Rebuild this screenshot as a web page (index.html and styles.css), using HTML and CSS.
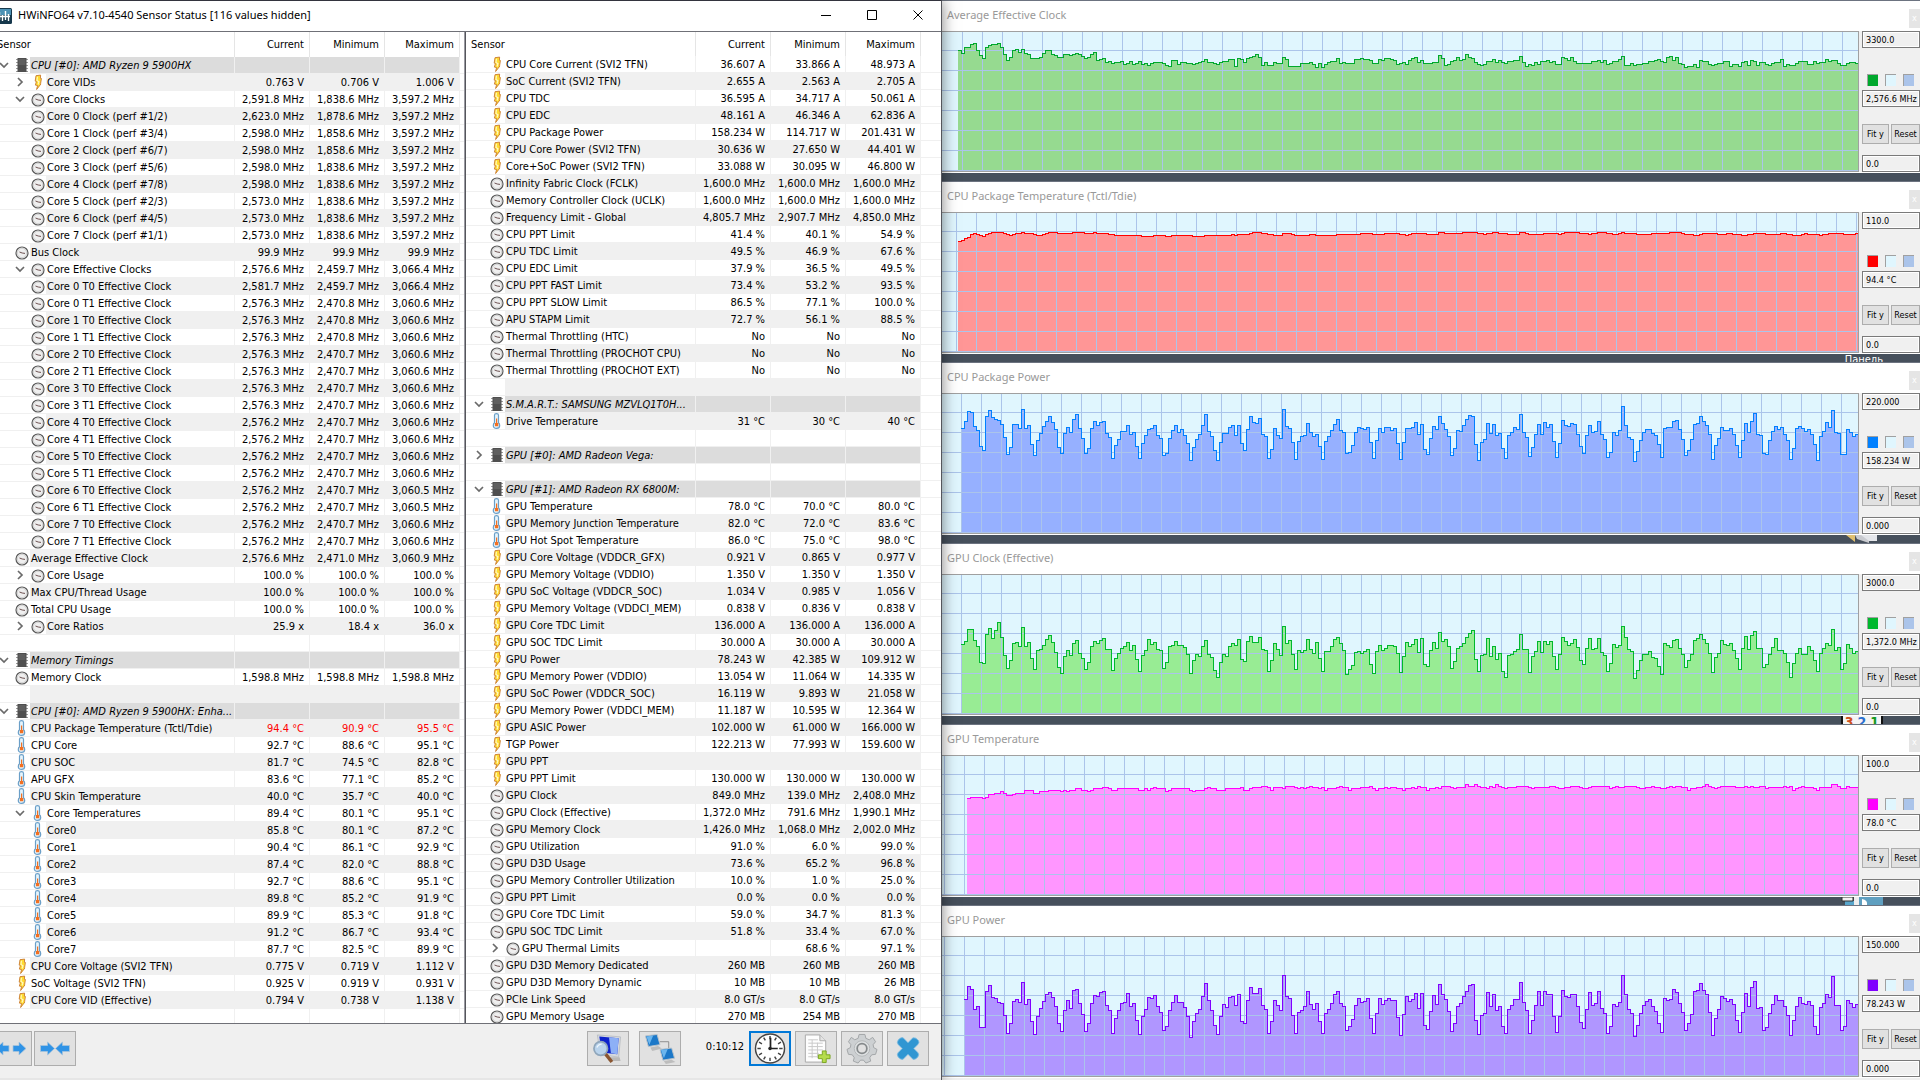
FILE: index.html
```html
<!DOCTYPE html>
<html lang="en">
<head>
  <meta charset="utf-8">
  <title>HWiNFO64 Sensor Status</title>
  <link rel="stylesheet" href="styles.css">
</head>
<body>
  <svg class="sprite" aria-hidden="true">
    <symbol id="clock" viewBox="0 -1 16 16">
      <circle cx="8" cy="8" r="6" fill="#efefef" stroke="#5a5a5a" stroke-width="1.2"/>
      <circle cx="8" cy="8" r="4.7" fill="none" stroke="#d2d2d2" stroke-width="1"/>
      <path d="M5.5 7 L8.2 8 L11 8.4" fill="none" stroke="#6e5252" stroke-width="1"/>
    </symbol>
    <symbol id="bolt" viewBox="0 -.5 16 16">
      <path d="M6 1.2 L10.6 .6 L10.4 3.8 L11.4 4 L10.6 9 L11 9.4 L6.6 15 L7.6 11 L5.4 10.6 L6.4 7 L5.2 6.6 Z" fill="#ffdc32" stroke="#c97a30" stroke-width=".9"/>
      <path d="M7.4 2.2 L7 6 L9 7.2 L8 10" fill="none" stroke="#fff9c8" stroke-width="1.1"/>
    </symbol>
    <symbol id="temp" viewBox="0 0 16 16">
      <path d="M5.5 2.2 Q5.5 .7 7.5 .7 Q9.500 .7 9.500 2.2 V9.8 Q10.700 10.8 10.700 12.4 Q10.700 15.3 7.500 15.3 Q4.300 15.3 4.300 12.4 Q4.300 10.8 5.500 9.8 Z" fill="#e6f4fc" stroke="#6a9fc8" stroke-width="1.2"/>
      <path d="M7 5.500 H8.200 V10 H9.300 V13.3 H5.900 V10 H7 Z" fill="#f27022"/>
    </symbol>
    <symbol id="chip" viewBox="0 0 16 16">
      <path d="M2 2.5H14M2 5.5H14M2 8.5H14M2 11.5H14M2 14.5H14" stroke="#9a9a9a" stroke-width="1"/>
      <rect x="3.500" y="1" width="9" height="14" fill="#4f4f4f"/>
      <rect x="4.500" y="2" width="7" height="6" fill="#5f5f5f"/>
    </symbol>
    <symbol id="open" viewBox="0 0 16 16">
      <path d="M2 6 L6 10 L10 6" fill="none" stroke="#6a6a6a" stroke-width="1.7"/>
    </symbol>
    <symbol id="closed" viewBox="0 0 16 16">
      <path d="M4 4 L8 8 L4 12" fill="none" stroke="#6a6a6a" stroke-width="1.7"/>
    </symbol>
  </svg>

  <div class="desktop">
    <main class="main-window">
      <header class="title-bar">
        <svg class="logo" viewBox="0 0 16 16" aria-hidden="true">
          <rect width="16" height="16" rx="1.5" fill="#16384c"/>
          <rect x="1" y="1" width="14" height="6" fill="#4d92b5"/>
          <path d="M3.5 4V12M6.5 7V13M9.5 3V12M12.5 6V13M2 8.5H14" stroke="#fff" stroke-width="1.4"/>
        </svg>
        <h1>HWiNFO64 v7.10-4540 Sensor Status [116 values hidden]</h1>
        <div class="window-buttons">
          <button aria-label="Minimize"><svg viewBox="0 0 10 10"><path d="M0 5.5H10"/></svg></button>
          <button aria-label="Maximize"><svg viewBox="0 0 10 10"><path d="M.5 .5H9.5V9.5H.5Z"/></svg></button>
          <button aria-label="Close"><svg viewBox="0 0 10 10"><path d="M.5 .5L9.5 9.5M9.5 .5L.5 9.5"/></svg></button>
        </div>
      </header>

      <div class="panels">
        <div class="panel left" id="leftPanel"></div>
        <div class="panel right" id="rightPanel"></div>
      </div>

      <footer class="toolbar">
        <div class="tool-group">
          <button aria-label="Expand columns">
            <svg viewBox="0 0 32 16"><path d="M1 8 L8 1.5 V5 H14 V11 H8 V14.5 Z M31 8 L24 1.5 V5 H18 V11 H24 V14.5 Z" fill="#2f93e6" stroke="#a8c4dc" stroke-width=".8"/></svg>
          </button>
          <button aria-label="Shrink columns">
            <svg viewBox="0 0 32 16"><path d="M15.5 8 L8.5 1.5 V5 H1.5 V11 H8.5 V14.5 Z M16.5 8 L23.5 1.5 V5 H30.5 V11 H23.5 V14.5 Z" fill="#2f93e6" stroke="#a8c4dc" stroke-width=".8"/></svg>
          </button>
        </div>
        <div class="tool-group">
          <button class="spaced" aria-label="Summary">
            <svg viewBox="0 0 32 32">
              <path d="M5 2 L29 4 L27 25 L8 22 Z" fill="#d5d9df" stroke="#a9adb5" stroke-width=".6"/>
              <path d="M7 3.500 L27 5.500 L25.500 22 L9.500 20 Z" fill="#0d22cc"/>
              <path d="M17 4.500 L27 5.500 L25.500 22 L19 21 Z" fill="#8db0f6"/>
              <path d="M15 25 H28 L29 29 H17 Z" fill="#b9b9b9"/>
              <path d="M13 21 L20 30" stroke="#8a5631" stroke-width="3.500"/>
              <circle cx="8.500" cy="16" r="7" fill="#b9d3ec" stroke="#8fa6bb" stroke-width="1.800"/>
              <path d="M4.500 15 Q6 11.500 9.500 11.500" fill="none" stroke="#eef6fc" stroke-width="1.500"/>
            </svg>
          </button>
          <button class="spaced" aria-label="Network">
            <svg viewBox="0 0 32 32">
              <path d="M16 9 H25 V18" fill="none" stroke="#8b8b8b" stroke-width="1"/>
              <path d="M1 3 L13 1.500 L16 12 L4 14 Z" fill="#1c78c8" stroke="#b9c2c9" stroke-width="1"/>
              <path d="M2 3.500 L9 2.600 L5 12 Z" fill="#6cb6ee"/>
              <path d="M6 15 L14 13.500 L18 16 L8 18.500 Z" fill="#bdbdbd"/>
              <path d="M16 17 L28 15.500 L31 26 L19 28 Z" fill="#1c78c8" stroke="#b9c2c9" stroke-width="1"/>
              <path d="M17 17.500 L24 16.600 L20 26 Z" fill="#6cb6ee"/>
              <path d="M20 29 L28 27.500 L32 30 L22 32 Z" fill="#bdbdbd"/>
            </svg>
          </button>
          <time>0:10:12</time>
          <button class="focused" aria-label="Reset clock">
            <svg viewBox="0 0 32 32">
              <circle cx="16" cy="16" r="15" fill="#fff" stroke="#444" stroke-width="1.500"/>
              <path d="M16 3V6.500M16 25.500V29M3 16H6.500M25.500 16H29M9.500 4.700L11.200 7.700M22.500 4.700L20.800 7.700M4.700 9.500L7.700 11.200M27.300 9.500L24.300 11.200M4.700 22.500L7.700 20.800M27.300 22.500L24.300 20.800M9.500 27.300L11.200 24.300M22.500 27.300L20.800 24.300" stroke="#444" stroke-width="1.500"/>
              <path d="M16.500 5V16H24" fill="none" stroke="#222" stroke-width="1.800"/>
              <circle cx="16" cy="16" r="1.800" fill="#222"/>
            </svg>
          </button>
          <button aria-label="Log to file">
            <svg viewBox="0 0 32 32">
              <path d="M5 2 H20 L26 8 V30 H5 Z" fill="#fdfdfd" stroke="#a9a9a9"/>
              <path d="M20 2 V8 H26" fill="#e4e4e4" stroke="#a9a9a9"/>
              <path d="M8 7H18M8 10.500H23M8 14H23M8 17.500H23M8 21H19M8 24.500H18M12 7V26M17.500 10V26" stroke="#c9c9c9"/>
              <path d="M22.500 18.500 H26.500 V22.500 H30.500 V26.500 H26.500 V30.500 H22.500 V26.500 H18.500 V22.500 H22.500 Z" fill="#b5dc4c" stroke="#7ba622"/>
            </svg>
          </button>
          <button aria-label="Settings">
            <svg viewBox="0 0 32 32">
              <path d="M13 1.500 H19 L20 5.500 L23.500 7 L27 4.500 L30 9 L27.500 12 L28 15 L31.500 17 L30 22 L26 22.500 L24 25.500 L25 29 L20 31 L17.500 28 H14.500 L12 31 L7 29 L8 25.500 L6 22.500 L2 22 L.500 17 L4 15 L4.500 12 L2 9 L5 4.500 L8.500 7 L12 5.500 Z" fill="#cdd0d2" stroke="#a2a5a7"/>
              <circle cx="16" cy="16" r="8" fill="#dde0e1" stroke="#b5b8ba"/>
              <circle cx="16" cy="16" r="5" fill="#e1e1e1" stroke="#85898b" stroke-width="1.800"/>
            </svg>
          </button>
          <button aria-label="Close sensors">
            <svg viewBox="0 0 32 32">
              <path d="M11 5 L16 10 L21 5 Q24 4 27 8 Q28 10 26 12 L22 16 L26 20 Q28 22 26 25 Q23 28 21 27 L16 22 L11 27 Q9 28 6 25 Q4 22 6 20 L10 16 L6 12 Q4 10 6 7 Q9 4 11 5 Z" fill="#3096d2" stroke="#7dbde2" stroke-width=".8"/>
            </svg>
          </button>
        </div>
      </footer>
    </main>

    <section class="charts" id="charts"></section>
  </div>

  <script src="script.js"></script>
</body>
</html>
```
FILE: styles.css
```css
* {
  box-sizing: border-box;
}
body {
  margin: 0;
  height: 100vh;
  overflow: hidden;
  background: #4a5460;
  color: #000;
  font-family: "DejaVu Sans Condensed", Tahoma, sans-serif;
  font-size: 11px;
}
button, input {
  font: inherit;
  color: inherit;
  padding: 0;
}
.sprite {
  display: none;
}
.desktop {
  display: grid;
  grid-template-columns: 942fr 978fr;
  grid-template-rows: 100%;
  height: 100%;
}

/* main sensor window, left edge is dragged past the screen */
.main-window {
  z-index: 1;
  display: flex;
  flex-direction: column;
  min-width: 0;
  margin-left: -10px;
  background: #fff;
  border-top: 1px solid #33343e;
  border-right: 1px solid #55565c;
  box-shadow: 0 0 14px rgba(0, 0, 0, 0.5);
}
.title-bar {
  display: flex;
  align-items: center;
  height: 30px;
  padding-left: 6px;
}
.logo {
  width: 16px;
  height: 16px;
}
.title-bar h1, .chart-title h2 {
  margin: 0;
  padding-bottom: 3px;
  font-family: "Noto Sans", "Segoe UI", sans-serif;
  font-size: 11px;
  font-weight: normal;
}
.title-bar h1 {
  margin-left: 6px;
}
.window-buttons {
  display: flex;
  margin-left: auto;
}
.window-buttons button {
  width: 46px;
  height: 29px;
  background: none;
  border: none;
}
.window-buttons svg {
  width: 10px;
  height: 10px;
  fill: none;
  stroke: #000;
}
.panels {
  flex: 1;
  display: grid;
  grid-template-columns: 475fr 476fr;
  grid-template-rows: 100%;
  min-height: 0;
  border-top: 1px solid #6f7077;
  border-bottom: 1px solid #6f7077;
}
.panel {
  overflow: hidden;
  min-width: 0;
  border-right: 1px solid #9a9aa2;
}
.panel.right {
  border-left: 1px solid #55565c;
  border-right: none;
}
.panel table {
  width: 100%;
  table-layout: fixed;
  border-spacing: 0;
  white-space: nowrap;
}
.value-col {
  width: 75px;
}
.left .rest-col {
  width: 4px;
}
.right .rest-col {
  width: 20px;
}
.panel th {
  height: 24px;
  padding: 0 5px;
  font-weight: normal;
  text-align: right;
  border-right: 1px solid #e5e5e5;
}
.left th {
  height: 25px;
}
.left th:first-child {
  padding-left: 7px;
}
.panel th:first-child {
  text-align: left;
}
.panel th:last-child, .panel td:last-child {
  border-right: none;
}
.panel td {
  height: 17px;
  padding: 2px 5px 0 0;
  line-height: 14px;
  text-align: right;
  border-right: 1px solid #f0f0f0;
  border-bottom: 1px solid #f0f0f0;
}
.panel td:first-child {
  padding: 0;
  text-align: left;
}
.name {
  display: flex;
  height: 16px;
  padding-left: 7px;
}
.left .name {
  padding-left: 8px;
}
.level-1 .name {
  padding-left: 23px;
}
.left .level-1 .name {
  padding-left: 24px;
}
.name svg, .name i {
  flex: none;
  width: 16px;
  height: 16px;
}
.name span {
  flex: 1;
  height: 16px;
  padding: 2px 0 0 1px;
}
.odd .name span, .odd td:not(:first-child):not(:last-child) {
  background: #f0f0f0;
}
.group .name span, .group td:not(:first-child):not(:last-child) {
  background: #dcdcdc;
}
.group .name span {
  font-style: italic;
}
.alert td {
  color: #f00;
}
.alert td:first-child {
  color: #000;
}

.toolbar {
  display: flex;
  flex: none;
  justify-content: space-between;
  height: 56px;
  padding: 7px 12px 0 0;
  background: #f0f0f0;
  border-bottom: 2px solid #e6e6e6;
}
.tool-group {
  display: flex;
  align-items: flex-start;
  gap: 4px;
}
.tool-group:first-child {
  gap: 2px;
}
.toolbar button {
  width: 42px;
  height: 35px;
  background: #e1e1e1;
  border: 1px solid #adadad;
}
.toolbar button.spaced {
  margin-right: 6px;
}
.toolbar button.focused {
  border: 2px solid #0078d7;
}
.toolbar svg {
  display: block;
  height: 31px;
  width: 32px;
  margin: 0 auto;
}
.toolbar time {
  margin: 0 1px 0 15px;
  line-height: 32px;
}

/* graph windows */
.charts {
  min-width: 0;
  background: #f0f0f0;
}
.chart {
  border-top: 1px solid #6c7380;
  background: #f0f0f0;
}
.chart-title {
  display: flex;
  align-items: center;
  justify-content: space-between;
  height: 30px;
  padding-left: 5px;
  background: #fff;
  color: #999;
}
.chart-title button {
  width: 11px;
  height: 19px;
  margin-top: 4px;
  overflow: hidden;
  background: #e5e5e5;
  border: none;
  color: #fff;
  font-size: 9px;
}
.chart-body {
  display: flex;
  height: 142px;
  border-bottom: 1px solid #fff;
}
.plot {
  flex: 1;
  min-width: 0;
  border: 1px solid #a0a0a0;
  border-left: none;
  background: #e0f6fe;
}
.plot svg {
  display: block;
  width: 100%;
  height: 139px;
}
.controls {
  width: 61px;
  padding-left: 3px;
}
.controls input {
  display: block;
  width: 58px;
  height: 17px;
  padding-left: 3px;
  background: #f0f0f0;
  border: 1px solid #7a7a7a;
  outline: 1px solid #fff;
  outline-offset: -2px;
  font-size: 9px;
}
.swatches {
  display: flex;
  gap: 7px;
  padding: 26px 0 4px 5px;
}
.swatch {
  width: 11px;
  height: 12px;
  border: 1px solid #a0a0a0;
  border-width: 1px 0 0 1px;
}
.swatch.back {
  background: #e0f6fe;
}
.swatch.grid {
  background: #abc4ea;
}
.scale-buttons {
  display: flex;
  gap: 2px;
  padding: 17px 0 11px;
}
.scale-buttons button {
  width: 27px;
  height: 20px;
  background: #e1e1e1;
  border: 1px solid #adadad;
  font-size: 9px;
}
.scale-buttons button:last-child {
  width: 29px;
}
/* strip of the desktop that shows between two graph windows */
.gap {
  display: flex;
  justify-content: flex-end;
  height: 8px;
  padding-right: 37px;
  overflow: hidden;
  background: #46505c;
  color: #fff;
  line-height: 12px;
}
.gap svg {
  width: 42px;
  height: 8px;
}
.gap b {
  padding: 0 2px;
  background: #f4f4f4;
  font-size: 14px;
}
.gap .red { color: #d0501c; border-left: 2px solid #111; }
.gap .blue { color: #2a6fd0; }
.gap .green { color: #159a20; border-right: 2px solid #111; }
```
FILE: script.js
```javascript
// level | icon | twisty | name | current | minimum | maximum
const leftRows = `
0|chip|open|CPU [#0]: AMD Ryzen 9 5900HX
1|bolt|closed|Core VIDs|0.763 V|0.706 V|1.006 V
1|clock|open|Core Clocks|2,591.8 MHz|1,838.6 MHz|3,597.2 MHz
1|clock||Core 0 Clock (perf #1/2)|2,623.0 MHz|1,878.6 MHz|3,597.2 MHz
1|clock||Core 1 Clock (perf #3/4)|2,598.0 MHz|1,858.6 MHz|3,597.2 MHz
1|clock||Core 2 Clock (perf #6/7)|2,598.0 MHz|1,858.6 MHz|3,597.2 MHz
1|clock||Core 3 Clock (perf #5/6)|2,598.0 MHz|1,838.6 MHz|3,597.2 MHz
1|clock||Core 4 Clock (perf #7/8)|2,598.0 MHz|1,838.6 MHz|3,597.2 MHz
1|clock||Core 5 Clock (perf #2/3)|2,573.0 MHz|1,838.6 MHz|3,597.2 MHz
1|clock||Core 6 Clock (perf #4/5)|2,573.0 MHz|1,838.6 MHz|3,597.2 MHz
1|clock||Core 7 Clock (perf #1/1)|2,573.0 MHz|1,838.6 MHz|3,597.2 MHz
0|clock||Bus Clock|99.9 MHz|99.9 MHz|99.9 MHz
1|clock|open|Core Effective Clocks|2,576.6 MHz|2,459.7 MHz|3,066.4 MHz
1|clock||Core 0 T0 Effective Clock|2,581.7 MHz|2,459.7 MHz|3,066.4 MHz
1|clock||Core 0 T1 Effective Clock|2,576.3 MHz|2,470.8 MHz|3,060.6 MHz
1|clock||Core 1 T0 Effective Clock|2,576.3 MHz|2,470.8 MHz|3,060.6 MHz
1|clock||Core 1 T1 Effective Clock|2,576.3 MHz|2,470.8 MHz|3,060.6 MHz
1|clock||Core 2 T0 Effective Clock|2,576.3 MHz|2,470.7 MHz|3,060.6 MHz
1|clock||Core 2 T1 Effective Clock|2,576.3 MHz|2,470.7 MHz|3,060.6 MHz
1|clock||Core 3 T0 Effective Clock|2,576.3 MHz|2,470.7 MHz|3,060.6 MHz
1|clock||Core 3 T1 Effective Clock|2,576.3 MHz|2,470.7 MHz|3,060.6 MHz
1|clock||Core 4 T0 Effective Clock|2,576.2 MHz|2,470.7 MHz|3,060.6 MHz
1|clock||Core 4 T1 Effective Clock|2,576.2 MHz|2,470.7 MHz|3,060.6 MHz
1|clock||Core 5 T0 Effective Clock|2,576.2 MHz|2,470.7 MHz|3,060.6 MHz
1|clock||Core 5 T1 Effective Clock|2,576.2 MHz|2,470.7 MHz|3,060.6 MHz
1|clock||Core 6 T0 Effective Clock|2,576.2 MHz|2,470.7 MHz|3,060.5 MHz
1|clock||Core 6 T1 Effective Clock|2,576.2 MHz|2,470.7 MHz|3,060.5 MHz
1|clock||Core 7 T0 Effective Clock|2,576.2 MHz|2,470.7 MHz|3,060.6 MHz
1|clock||Core 7 T1 Effective Clock|2,576.2 MHz|2,470.7 MHz|3,060.6 MHz
0|clock||Average Effective Clock|2,576.6 MHz|2,471.0 MHz|3,060.9 MHz
1|clock|closed|Core Usage|100.0 %|100.0 %|100.0 %
0|clock||Max CPU/Thread Usage|100.0 %|100.0 %|100.0 %
0|clock||Total CPU Usage|100.0 %|100.0 %|100.0 %
1|clock|closed|Core Ratios|25.9 x|18.4 x|36.0 x
0
0|chip|open|Memory Timings
0|clock||Memory Clock|1,598.8 MHz|1,598.8 MHz|1,598.8 MHz
0
0|chip|open|CPU [#0]: AMD Ryzen 9 5900HX: Enha...
0|temp||CPU Package Temperature (Tctl/Tdie)|94.4 °C|90.9 °C|95.5 °C
0|temp||CPU Core|92.7 °C|88.6 °C|95.1 °C
0|temp||CPU SOC|81.7 °C|74.5 °C|82.8 °C
0|temp||APU GFX|83.6 °C|77.1 °C|85.2 °C
0|temp||CPU Skin Temperature|40.0 °C|35.7 °C|40.0 °C
1|temp|open|Core Temperatures|89.4 °C|80.1 °C|95.1 °C
1|temp||Core0|85.8 °C|80.1 °C|87.2 °C
1|temp||Core1|90.4 °C|86.1 °C|92.9 °C
1|temp||Core2|87.4 °C|82.0 °C|88.8 °C
1|temp||Core3|92.7 °C|88.6 °C|95.1 °C
1|temp||Core4|89.8 °C|85.2 °C|91.9 °C
1|temp||Core5|89.9 °C|85.3 °C|91.8 °C
1|temp||Core6|91.2 °C|86.7 °C|93.4 °C
1|temp||Core7|87.7 °C|82.5 °C|89.9 °C
0|bolt||CPU Core Voltage (SVI2 TFN)|0.775 V|0.719 V|1.112 V
0|bolt||SoC Voltage (SVI2 TFN)|0.925 V|0.919 V|0.931 V
0|bolt||CPU Core VID (Effective)|0.794 V|0.738 V|1.138 V
0`;

const rightRows = `
0|bolt||CPU Core Current (SVI2 TFN)|36.607 A|33.866 A|48.973 A
0|bolt||SoC Current (SVI2 TFN)|2.655 A|2.563 A|2.705 A
0|bolt||CPU TDC|36.595 A|34.717 A|50.061 A
0|bolt||CPU EDC|48.161 A|46.346 A|62.836 A
0|bolt||CPU Package Power|158.234 W|114.717 W|201.431 W
0|bolt||CPU Core Power (SVI2 TFN)|30.636 W|27.650 W|44.401 W
0|bolt||Core+SoC Power (SVI2 TFN)|33.088 W|30.095 W|46.800 W
0|clock||Infinity Fabric Clock (FCLK)|1,600.0 MHz|1,600.0 MHz|1,600.0 MHz
0|clock||Memory Controller Clock (UCLK)|1,600.0 MHz|1,600.0 MHz|1,600.0 MHz
0|clock||Frequency Limit - Global|4,805.7 MHz|2,907.7 MHz|4,850.0 MHz
0|clock||CPU PPT Limit|41.4 %|40.1 %|54.9 %
0|clock||CPU TDC Limit|49.5 %|46.9 %|67.6 %
0|clock||CPU EDC Limit|37.9 %|36.5 %|49.5 %
0|clock||CPU PPT FAST Limit|73.4 %|53.2 %|93.5 %
0|clock||CPU PPT SLOW Limit|86.5 %|77.1 %|100.0 %
0|clock||APU STAPM Limit|72.7 %|56.1 %|88.5 %
0|clock||Thermal Throttling (HTC)|No|No|No
0|clock||Thermal Throttling (PROCHOT CPU)|No|No|No
0|clock||Thermal Throttling (PROCHOT EXT)|No|No|No
0
0|chip|open|S.M.A.R.T.: SAMSUNG MZVLQ1T0H...
0|temp||Drive Temperature|31 °C|30 °C|40 °C
0
0|chip|closed|GPU [#0]: AMD Radeon Vega:
0
0|chip|open|GPU [#1]: AMD Radeon RX 6800M:
0|temp||GPU Temperature|78.0 °C|70.0 °C|80.0 °C
0|temp||GPU Memory Junction Temperature|82.0 °C|72.0 °C|83.6 °C
0|temp||GPU Hot Spot Temperature|86.0 °C|75.0 °C|98.0 °C
0|bolt||GPU Core Voltage (VDDCR_GFX)|0.921 V|0.865 V|0.977 V
0|bolt||GPU Memory Voltage (VDDIO)|1.350 V|1.350 V|1.350 V
0|bolt||GPU SoC Voltage (VDDCR_SOC)|1.034 V|0.985 V|1.056 V
0|bolt||GPU Memory Voltage (VDDCI_MEM)|0.838 V|0.836 V|0.838 V
0|bolt||GPU Core TDC Limit|136.000 A|136.000 A|136.000 A
0|bolt||GPU SOC TDC Limit|30.000 A|30.000 A|30.000 A
0|bolt||GPU Power|78.243 W|42.385 W|109.912 W
0|bolt||GPU Memory Power (VDDIO)|13.054 W|11.064 W|14.335 W
0|bolt||GPU SoC Power (VDDCR_SOC)|16.119 W|9.893 W|21.058 W
0|bolt||GPU Memory Power (VDDCI_MEM)|11.187 W|10.595 W|12.364 W
0|bolt||GPU ASIC Power|102.000 W|61.000 W|166.000 W
0|bolt||TGP Power|122.213 W|77.993 W|159.600 W
0|bolt||GPU PPT|||
0|bolt||GPU PPT Limit|130.000 W|130.000 W|130.000 W
0|clock||GPU Clock|849.0 MHz|139.0 MHz|2,408.0 MHz
0|clock||GPU Clock (Effective)|1,372.0 MHz|791.6 MHz|1,990.1 MHz
0|clock||GPU Memory Clock|1,426.0 MHz|1,068.0 MHz|2,002.0 MHz
0|clock||GPU Utilization|91.0 %|6.0 %|99.0 %
0|clock||GPU D3D Usage|73.6 %|65.2 %|96.8 %
0|clock||GPU Memory Controller Utilization|10.0 %|1.0 %|25.0 %
0|clock||GPU PPT Limit|0.0 %|0.0 %|0.0 %
0|clock||GPU Core TDC Limit|59.0 %|34.7 %|81.3 %
0|clock||GPU SOC TDC Limit|51.8 %|33.4 %|67.0 %
1|clock|closed|GPU Thermal Limits||68.6 %|97.1 %
0|clock||GPU D3D Memory Dedicated|260 MB|260 MB|260 MB
0|clock||GPU D3D Memory Dynamic|10 MB|10 MB|26 MB
0|clock||PCIe Link Speed|8.0 GT/s|8.0 GT/s|8.0 GT/s
0|clock||GPU Memory Usage|270 MB|254 MB|270 MB`;

function icon(id) {
  return id ? `<svg aria-hidden="true"><use href="#${id}"/></svg>` : '<i></i>';
}

function renderTable(id, text) {
  const rows = text.trim().split('\n').map((line, i) => {
    const [level, type, twisty, name = '', cur = '', min = '', max = ''] = line.split('|');
    const cls = [`level-${level}`];
    if (i % 2) cls.push('odd');
    if (type === 'chip') cls.push('group');
    if (name.startsWith('CPU Package Temperature')) cls.push('alert');
    return `<tr class="${cls.join(' ')}">
      <td><div class="name">${icon(twisty)}${icon(type)}<span>${name}</span></div></td>
      <td>${cur}</td><td>${min}</td><td>${max}</td><td></td></tr>`;
  });
  document.getElementById(id).innerHTML = `
    <table>
      <colgroup><col><col class="value-col"><col class="value-col"><col class="value-col"><col class="rest-col"></colgroup>
      <thead><tr><th>Sensor</th><th>Current</th><th>Minimum</th><th>Maximum</th><th></th></tr></thead>
      <tbody>${rows.join('')}</tbody>
    </table>`;
}

// samples are heights in the plot, newest last; "118x4" repeats a sample
const charts = [
  { title: 'Average Effective Clock', max: '3300.0', value: '2,576.6 MHz', min: '0.0', line: '#00a82d', fill: '#96da90', grid: 16,
    samples: '121 118 124x2 127 128 121 116 113 124 126 127x2 128 124 117 111 114 121 122 119 122 118 117 113x3 114 118 121x2 117 116 114x2 117x2 116 117 118 117 115 113 114 117 119 111 112 113 109 110 108 109x2 110 107 108 110 107 108 110 107 108 106 108 109x3 108 106 105 111x2 107 109x2 108x2 107 108 109 110 112 109x2 108 107 109 110x2 112x2 105 113 112 109 113 114 115 117 114 106 109 106x2 109 108x2 114 112 105x4 108x3 109 107 104 108 104 107 109 110x2 113 108 109 108x3 112x2 113 112x2 111 108x2 112 111 113x2 112 111 107 108 109 107 111 113 114 109 111 108x3 109x2 116 113 106 107 110 111 114 111 112 117 114 113 109 107 106 107 110x2 112 109 111 109 108 110x2 111x2 115 109 105 107 106 109 107 110x2 111 109 110 107x2 114 113 111 114 110 108x5 110x2 111 109 111 107 108 110x2 112 115 106x2 108 106 107x2 108x2 110x2 111 112 110 109 114 115 111 114 108 107 104 105x2 107 104 111 110x2 107 106 107 108x2 110x2 105 107x2 105 109 110 106 111 110 106 109x2 107 106 108 109x2 112 105 107 106x2 108 110x3 107x2 110 108 109x2 112 110 111x2 108 106x2 108 109x2 108' },
  { title: 'CPU Package Temperature (Tctl/Tdie)', max: '110.0', value: '94.4 °C', min: '0.0', line: '#ff0000', fill: '#ff9696', grid: 2,
    samples: '111 112 114 115 118 119 118 117 116 118 119 120x4 119 118 117 118 119x2 120 119x3 118 117x2 118 119 120x3 119x5 120x4 119x3 120 119x4 118x2 117x9 116x4 117x4 116x2 117x7 116x4 117x9 118 117 118x4 119 120x3 119x2 118x2 117x3 119x3 118 117x5 118x2 117x7 118x8 119x4 118x4 119x5 118x2 117 118 119x5 118x4 120x2 119x6 120x5 119x2 118 119x2 120x2 119x3 118x4 120x2 119 118x5 119x5 118 119 120x5 119x3 118 119x2 120x3 119x2 118x2 119 120 119x4 118x5 119x6 120x4 119 118x3 117x2 118 119x5 118x3 119x2 118x3 117x2 118x2 119x4 118x5 119x2 118x2 117x3 118 119 118x4 117 118x2 119x5 118x4 119' },
  { title: 'CPU Package Power', max: '220.000', value: '158.234 W', min: '0.000', line: '#0080ff', fill: '#96b0ff', grid: 17,
    samples: '105 112 122 121 107 103 87 83 117 123 116 114 113 109 96 79 86 109x2 105 124 105 108 89 78 93 100 107 112 117 111 104 86 80 100 106 101 114 119 105 95 80 85 105 112 108 111 112 100 96 75 88 94 102x2 108 99 101 87 75 90 98 104 105 108 98 95 78 80 95 103 108 101 104 98 90 73 86 94 99 108 119 102 97 83 73 91 100x2 106 108 98 108 90 83 104 117 111 110 115 99 97 75 84 105 98 95 124 107 105 91 74 92 97 98 110 101 97 99 87 74 92 97 103 109 114 103 101 80 81 88 101 106 105 104 106 91 75 93 105 101 106x2 103 105 90 74 91 105x2 106 111 99 109 84 79 95 107 104 117 110 104 97 78 85 103 102 108 114 118 117 89 73 91 94 110 100 109 98 100 85 75 98 101 106 104 119 101 96 77 86 99 109 99 111 106 109 92 76 90 113 108 107 110 109 99 87 80 98 108 101 102 112 99 94 76 81 101 98 103 127 108 96 94 72 82 93 101 104x2 100 98 89 76 105 106x2 112 113 104 94 78 83 94 109 110 117 112 108 99 74 88 95 106 103x2 105 99 88 76 93 110 101 112 120 99 98 80 79 93 102 107 104 106 99 93 74 85 105 107 105 102 104 99 89 73 97 102 111 106 123 101 100 79x2 104 101 97 99' },
  { title: 'GPU Clock (Effective)', max: '3000.0', value: '1,372.0 MHz', min: '0.0', line: '#00b82d', fill: '#98ec94', grid: 17,
    samples: '70 73 85x2 74 68 52 51 80 86 76 84 92 77 59 46 54 71 72 68 87 68 72 56 45 64 65 69 75 79 72 62 47 41 58 64 59 71 74 61 56 45 52 68 73 71 74 76 65x2 44 56 61 66 68 72 64 69 55 43 59 64 75 70 72 65 64 46 52 68 69 73 69x2 67 60 41 54 60 58 68 74 60 57 44 37 52 60 58 68 71 69 75 55 53 73 78 72x2 77 65 64 43 54 71 65 59 88 71 74 60 45 64 62 64 75 65 61 72 56 43 63x2 68 75 77 71 64 40 45 49 62 63 61 63 65 50 41 63 69 64 66 69x2 68 61 42 58 72 68 70 75 62 76 50 48 64 72 66 82 73 75 68 46 53 66 68 71 77 81 84 55 43 59 60 76 58 68 55 61 43 37 59 60 63 65 80 65x2 42 58 63 73 62 73 70 73 58 45 60 77 73 69 71 75 67 54 50 66 76 65 66 76 62 59 43 51 70 67 69 88 77 65 63 36 44 54 60x2 63 57 56 48 40 71 69 67 74 75 66 60 47 54 60 74 76 80 75 71 61 42 57 61 74 70 69 71 64 56 45 66 78 65 79 83 66x2 47 50 60 67 76 64x2 61 52 37 51 61 66 60x2 68 64 54 43 61 66 71 69 85 64 67 45 51 70 66 61 63' },
  { title: 'GPU Temperature', max: '100.0', value: '78.0 °C', min: '0.0', line: '#ff00ff', fill: '#ff96ff', grid: 14,
    samples: '97 98x4 97 98 101x2 102x2 104 102 100x2 101 102x3 105x3 102x2 104x3 105x4 104 105 104 105x2 107x2 105x2 104 105 107x3 108x2 107 105x2 107x7 105x2 107 105 107 108 107x3 104 105 107x6 105 104 105x3 107 108 107x2 105x3 107x5 108 105x2 107 108x3 109x2 108 105 108x3 107 109x3 108 107 108 107 108 109 108x2 107 108 105 107x3 108 109 108x2 105 107x3 108x3 109 107 105 107x2 108 107 108x2 107x2 105 107x2 108 107 109 108x2 105 107x2 108 107 109x3 108 107 108x3 111 109x2 111 109 108x2 107 109 108 111 109 108 107 108x3 109x4 108 107 108x5 109x2 108 107x2 108x2 109x3 108 107x2 108 109x6 107 108 109 108x2 109x4 108 107x2 108x2 109 108x2 107x2 108 109 108 109x2 108x2 105 107x2 108x2 109 111 109 108 107 108 109x5 108x3 109 108 109 108x2 109x2 107 108x5 109 108 109 105 107 108 109 108x3 107 105 108x4 111x2 109 107x2 109 108x3' },
  { title: 'GPU Power', max: '150.000', value: '78.243 W', min: '0.000', line: '#8000ff', fill: '#b096ff', grid: 14,
    samples: '77 90 87 67 70 49x2 85 91 79 78 74 73 61 43 53 75 77 74 94 72 77 55 42 60 68 75 82 84 79 70 53 45 66 76 68 86 87 73 62 45 53 73 81 80 84 85 71 66 43 58 66 73 74 83 70 73 56 42 60 67 79 78 81 70 64 46 50 66 74 81 74x2 69 60 39 55 63 67 80 93 76 66 51 42 60 72 69 79 80 71 82 55 53 76 89 83x2 88 71 67 43 55 76 71 66 101 80 78 61 43 64 66 70 85 72 67 73 55 43 63 67 73 82 85 73 70 46 50 57 71 78 74 75 78 58 43 63 78 72 76 78 76x2 59 41 62 80 75 77 83 68 83 51 47 65 81 72 92 82 77 65 45 53 70 73 80 85 91 92 56 42 61 63 84 70 82 66 70 50 43 67 71 77x2 94 74 66 43 56 71 85 71 85 82x2 60 44 60 86 80 79 82x2 70 54 48 67 84 71 73 85 68 63 43 50 72 70 74 101 82 67 63 40 51 63 71 75 77 70 65 53 44 78 76 77 87 84 73 64 46 53 62 85 86 93 86 82 64 41 58 67 80 78 75 77 72 56 44 64 83 70 89 95 68 69 46 49 63 72 81 76x2 70 61 41 56 70 79 73 72 75 71 50 42 69 73 82 79 100 71x2 46 50 76 73 69 72' }
];

// what is left of the desktop icons between the windows
const gaps = [
  '',
  'Панель',
  '<svg viewBox="0 0 42 8"><path d="M5 0H14V7Z" fill="#e0c070"/><path d="M14 0H28V8L16 4Z" fill="#c9cbd0"/><path d="M20 0H36V6H28Z" fill="#e4e6ea"/></svg>',
  '<b class="red">3</b><b class="blue">2</b><b class="green">1</b>',
  '<svg viewBox="0 0 42 8"><path d="M4 4H40V8H4Z" fill="#58a6cc"/><path d="M18 0H42V8H18Z" fill="#5f9fc0"/><path d="M1 0H12V4H1Z" fill="#f2f2f2" stroke="#333"/><path d="M13 0H18V8H13Z" fill="#eee"/><path d="M21 2Q27 3 26 8H21Z" fill="#fff"/></svg>'
];

const W = 916, H = 139, STEP = 3;

function drawPlot(chart) {
  const values = [];
  chart.samples.split(' ').forEach(s => {
    const [v, n = 1] = s.split('x').map(Number);
    for (let i = 0; i < n; i++) values.push(v);
  });

  const start = W - values.length * STEP;
  let d = '';
  values.forEach((v, i) => {
    const y = H - v + 0.5;
    d += (i ? 'V' : `M${start} `) + y + 'H' + (start + (i + 1) * STEP + 0.5);
  });

  let grid = '';
  for (let x = W - chart.grid; x > 0; x -= 20) grid += `M${x + 0.5} 0V${H}`;
  for (let y = H - 0.5; y > 0; y -= 20) grid += `M0 ${y}H${W}`;

  return `<svg viewBox="0 0 ${W} ${H}" preserveAspectRatio="none" shape-rendering="crispEdges" role="img" aria-label="${chart.title}">
    <path d="${d}V${H}H${start}Z" fill="${chart.fill}"/>
    <path d="${grid}" stroke="#abc4ea"/>
    <path d="${d}" fill="none" stroke="${chart.line}"/>
  </svg>`;
}

function renderCharts() {
  document.getElementById('charts').innerHTML = charts.map((c, i) => `
    <article class="chart">
      <div class="chart-title"><h2>${c.title}</h2><button aria-label="Close ${c.title}">x</button></div>
      <div class="chart-body">
        <div class="plot">${drawPlot(c)}</div>
        <div class="controls">
          <input type="text" value="${c.max}" aria-label="Maximum">
          <div class="swatches">
            <div class="swatch" style="background: ${c.line}"></div>
            <div class="swatch back"></div>
            <div class="swatch grid"></div>
          </div>
          <input type="text" value="${c.value}" aria-label="Current value" readonly>
          <div class="scale-buttons"><button>Fit y</button><button>Reset</button></div>
          <input type="text" value="${c.min}" aria-label="Minimum">
        </div>
      </div>
    </article>
    ${i < gaps.length ? `<div class="gap">${gaps[i]}</div>` : ''}`).join('');
}

renderTable('leftPanel', leftRows);
renderTable('rightPanel', rightRows);
renderCharts();
```
